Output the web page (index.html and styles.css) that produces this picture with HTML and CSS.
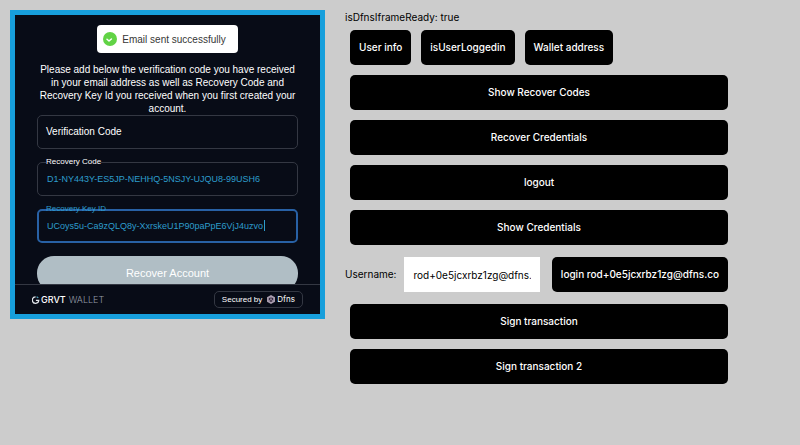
FILE: index.html
```html
<!DOCTYPE html>
<html lang="en">
<head>
<meta charset="utf-8">
<meta name="viewport" content="width=device-width, initial-scale=1">
<title>Wallet recovery</title>
<link rel="stylesheet" href="styles.css">
</head>
<body>
<main class="page">
  <section class="wallet">
    <div class="wallet-body">
      <div class="toast" role="status">
        <svg class="toast-icon" viewBox="0 0 14 14" aria-hidden="true"><circle cx="7" cy="7" r="7" fill="#61d345"/><path d="M4 7.2 6 9 8.4 7" fill="none" stroke="#fff" stroke-width="1.5" stroke-linecap="round" stroke-linejoin="round"/></svg>
        <span>Email sent successfully</span>
      </div>
      <form class="recover-form">
        <p class="intro">Please add below the verification code you have received in your email address as well as Recovery Code and Recovery Key Id you received when you first created your account.</p>
        <div class="field">
          <input class="field-input" id="verification" type="text">
          <label class="field-label field-label-inside" for="verification">Verification Code</label>
        </div>
        <div class="field">
          <input class="field-input" id="code" type="text" value="D1-NY443Y-ES5JP-NEHHQ-5NSJY-UJQU8-99USH6">
          <label class="field-label field-label-notch" for="code">Recovery Code</label>
        </div>
        <div class="field field-active">
          <input class="field-input" id="keyid" type="text" value="UCoys5u-Ca9zQLQ8y-XxrskeU1P90paPpE6VjJ4uzvo">
          <label class="field-label field-label-notch" for="keyid">Recovery Key ID</label>
          <span class="caret"></span>
        </div>
        <button class="recover" type="button">Recover Account</button>
      </form>
    </div>
    <footer class="wallet-footer">
      <div class="brand">
        <svg class="brand-logo" viewBox="0 0 8 8" aria-hidden="true"><path d="M3.600 .9A3.200 3.200 0 1 0 6.800 4.300H3.900" fill="none" stroke="#e4e8ee" stroke-width="1.200"/><path d="M4.600 .9A3.200 3.200 0 0 1 6.200 2" fill="none" stroke="#57a9c4" stroke-width="1.200"/></svg>
        <span class="brand-name">GRVT</span>
        <span class="brand-kind">WALLET</span>
      </div>
      <a class="secured" href="#">
        <span>Secured by</span>
        <svg class="hex" viewBox="0 0 8 9" aria-hidden="true"><path d="M4 0 8 2.200V6.800L4 9 0 6.800V2.200Z" fill="#a99daf"/><path d="M4 2 6.200 3.200V5.800L4 7 1.800 5.800V3.200Z" fill="#30243a"/><path d="M4 2V4.500L6.200 5.800M4 4.500 1.800 5.800" fill="none" stroke="#d8c9da" stroke-width=".6"/></svg>
        <span class="dfns">Dfns</span>
      </a>
    </footer>
  </section>

  <section class="controls">
    <p class="status">isDfnsIframeReady: true</p>
    <div class="button-row">
      <button class="btn" type="button">User info</button>
      <button class="btn" type="button">isUserLoggedin</button>
      <button class="btn" type="button">Wallet address</button>
    </div>
    <div class="stack">
      <button class="btn" type="button">Show Recover Codes</button>
      <button class="btn" type="button">Recover Credentials</button>
      <button class="btn" type="button">logout</button>
      <button class="btn" type="button">Show Credentials</button>
    </div>
    <div class="login-row">
      <label for="username">Username:</label>
      <input class="username" id="username" type="text" value="rod+0e5jcxrbz1zg@dfns.co">
      <button class="btn" type="button">login rod+0e5jcxrbz1zg@dfns.co</button>
    </div>
    <div class="stack">
      <button class="btn" type="button">Sign transaction</button>
      <button class="btn" type="button">Sign transaction 2</button>
    </div>
  </section>
</main>
</body>
</html>
```
FILE: styles.css
```css
* { box-sizing: border-box; }

body {
  margin: 0;
  background: #ccc;
  color: #000;
  font: 10px/15px Inter, sans-serif;
}

button, input { font: inherit; }
p { margin: 0; }

.page {
  display: flex;
  align-items: flex-start;
  gap: 20px;
  padding: 10px;
}

/* Embedded wallet */
.wallet {
  flex: 0 1 315px;
  border: 5px solid #179fdc;
  background: #080c17;
  color: #fff;
  font-family: "Liberation Sans", Arial, sans-serif;
}

.wallet-body {
  height: 269px;
  padding: 10px 22px 0;
  overflow: hidden;
}

.toast {
  display: flex;
  align-items: center;
  gap: 5px;
  width: fit-content;
  height: 28px;
  margin: 0 auto 10px;
  padding: 0 12px 0 6px;
  border-radius: 4px;
  background: #fff;
  color: #363636;
  font-size: 10px;
}

.toast-icon { width: 14px; height: 14px; }

.recover-form {
  display: flex;
  flex-direction: column;
}

.intro {
  font-size: 10px;
  line-height: 13px;
  text-align: center;
}

.field {
  position: relative;
  margin-bottom: 13px;
}

.field-input {
  display: block;
  width: 100%;
  height: 34px;
  padding: 0 9px;
  border: 1px solid #343843;
  border-radius: 5px;
  outline: 0;
  background: transparent;
  color: #2d9ccc;
  font-size: 9px;
}

.field-active .field-input { border: 2px solid #2861a5; padding: 0 8px; }

.field-label { position: absolute; left: 9px; }
.field-label-inside { top: 9px; font-size: 10px; }

.field-label-notch {
  top: -5px;
  background: #080c17;
  font-size: 8px;
  line-height: 10px;
}

.field-active .field-label { background: none; color: #2d9ccc; }

.caret {
  position: absolute;
  top: 11px;
  left: 227px;
  width: 1px;
  height: 11px;
  background: #2d9ccc;
}

.recover {
  height: 35px;
  border: 0;
  border-radius: 17px;
  background: #b0bec5;
  color: #fff;
  font-size: 11px;
}

.wallet-footer {
  display: flex;
  align-items: center;
  justify-content: space-between;
  height: 30px;
  padding: 0 17px;
  border-top: 1px solid #343843;
}

.brand {
  display: flex;
  align-items: center;
  font-family: Inter, sans-serif;
  font-size: 9px;
}

.brand-logo { width: 8px; height: 8px; }
.brand-name { margin: 0 3px 0 1px; font-weight: 500; }
.brand-kind { color: #969da8; font-weight: 300; }

.secured {
  display: flex;
  align-items: center;
  height: 17px;
  padding: 0 7px;
  border: 1px solid #343843;
  border-radius: 5px;
  color: #fff;
  font-size: 8px;
  text-decoration: none;
}

.hex { width: 8px; height: 9px; margin: 0 2px 0 5px; }
.dfns { font-family: Inter, sans-serif; }

/* Demo controls */
.controls { flex: 0 1 388px; min-width: 0; }

.button-row, .stack {
  display: flex;
  gap: 10px;
  padding: 5px;
}

.stack { flex-direction: column; }

.btn {
  height: 35px;
  padding: 0 10px;
  border: 0;
  border-radius: 5px;
  background: #000;
  color: #fff;
  font-weight: 500;
  white-space: nowrap;
}

.button-row .btn { padding: 0 9px; }

.login-row {
  display: flex;
  align-items: center;
  padding: 7px 5px 7px 0;
}

.login-row .btn { padding: 0 9px; }

.username {
  flex: 1;
  min-width: 0;
  height: 35px;
  margin: 0 12px 0 8px;
  padding: 0 9px;
  border: 0;
  border-radius: 0;
  background: #fff;
  color: #000;
}
```
